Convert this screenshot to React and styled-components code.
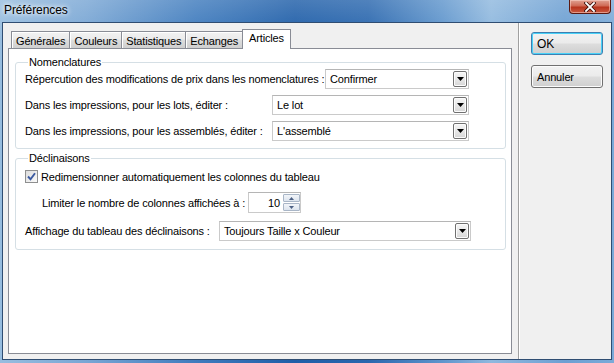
import React from 'react'
import styled, { createGlobalStyle } from 'styled-components'

const GlobalStyle = createGlobalStyle`
  html, body {
    margin: 0;
    padding: 0;
  }
  body {
    width: 614px;
    height: 363px;
    overflow: hidden;
    font-family: "Liberation Sans", Arial, sans-serif;
    font-size: 11px;
    letter-spacing: -0.15px;
    color: #000;
  }
`;

const Window = styled.div`
  width: 614px;
  height: 363px;
  display: flex;
  flex-direction: column;
  background:
    linear-gradient(180deg, rgba(255,255,255,0.18), rgba(255,255,255,0) 40px),
    linear-gradient(90deg, #97bddf 0%, #79a6d4 14%, #3f7bbd 32%, #1f5ea8 48%, #2a67ae 60%, #5f95cc 72%, #8fb8de 80%, #6c9fd2 92%, #7aaad8 100%);
`;

const TitleBar = styled.div`
  height: 22px;
  display: flex;
  align-items: center;
  padding-left: 4px;
`;

const Title = styled.span`
  font-size: 12px;
  letter-spacing: -0.1px;
  color: #000;
  text-shadow: 0 0 6px #fff, 0 0 4px rgba(255,255,255,0.9);
  margin-top: -2px;
`;

const CloseButton = styled.div`
  margin-left: auto;
  margin-right: 3px;
  align-self: flex-start;
  width: 42px;
  height: 14px;
  box-sizing: border-box;
  border: 1px solid #5b1a12;
  border-top: none;
  border-radius: 0 0 4px 4px;
  background: linear-gradient(180deg, #e0a293 0%, #cf6a55 45%, #b8341d 55%, #c95a41 100%);
  box-shadow: inset 0 0 0 1px rgba(255,220,210,0.5);
  display: flex;
  align-items: center;
  justify-content: center;
`;

const Client = styled.div`
  flex: 1;
  margin: 0 2px 3px 2px;
  border: 1px solid #2f4d72;
  background: #f0f0f0;
  display: flex;
`;

const LeftArea = styled.div`
  width: 515px;
  padding: 6px 0 0 5px;
  box-sizing: border-box;
  display: flex;
  flex-direction: column;
`;

const Separator = styled.div`
  width: 1px;
  background: #a0a0a0;
  border-right: 1px solid #fff;
`;

const RightArea = styled.div`
  flex: 1;
  padding: 9px 0 0 11px;
  display: flex;
  flex-direction: column;
  gap: 10px;
`;

const TabRow = styled.div`
  display: flex;
  align-items: flex-start;
  height: 20px;
  margin-bottom: -1px;
  padding-left: 3px;
  position: relative;
  z-index: 1;
`;

const Tab = styled.div`
  box-sizing: border-box;
  height: ${p => (p.$active ? 20 : 17)}px;
  margin-top: ${p => (p.$active ? 0 : 2)}px;
  margin-left: ${p => (p.$first ? 0 : -1)}px;
  padding: ${p => (p.$active ? '2px 6px 0' : '1px 4px 0')};
  border: 1px solid #898c95;
  border-bottom: none;
  background: ${p => (p.$active ? '#fff' : 'linear-gradient(180deg, #f2f2f2 0%, #ebebeb 45%, #dddddd 50%, #cfcfcf 100%)')};
  display: flex;
  align-items: ${p => (p.$active ? 'flex-start' : 'center')};
  white-space: nowrap;
  box-shadow: ${p => (p.$active ? 'none' : 'inset 1px 1px 0 #fff')};
`;

const Panel = styled.div`
  width: 504px;
  height: 306px;
  box-sizing: border-box;
  border: 1px solid #898c95;
  background: #fff;
  padding: 6px 5px 0 6px;
  display: flex;
  flex-direction: column;
  gap: 2px;
`;

const Group = styled.fieldset`
  margin: 0;
  min-width: 0;
  border: 1px solid #d5dfe5;
  border-radius: 3px;
  padding: 0 36px ${p => p.$pb}px 9px;
  display: flex;
  flex-direction: column;
  gap: ${p => p.$gap}px;
`;

const Legend = styled.legend`
  padding: 0 1px;
  margin-left: 3px;
  line-height: 14px;
`;

const Row = styled.div`
  display: flex;
  align-items: center;
  margin-top: ${p => p.$mt || 0}px;
  padding-left: ${p => p.$indent || 0}px;
`;

const Label = styled.span`
  width: ${p => p.$w}px;
  flex-shrink: 0;
  white-space: nowrap;
`;

const Combo = styled.div`
  width: ${p => p.$w}px;
  height: 20px;
  box-sizing: border-box;
  flex-shrink: 0;
  border: 1px solid #cacaca;
  border-top-color: #b5b5b5;
  background: #fff;
  display: flex;
  align-items: center;
  padding: 0 1px 0 4px;
`;

const ComboText = styled.span`
  flex: 1;
  white-space: nowrap;
`;

const DropButton = styled.div`
  width: 14px;
  height: 16px;
  box-sizing: border-box;
  border: 1px solid #707070;
  border-radius: 2px;
  background: linear-gradient(180deg, #f6f6f6 0%, #e8e8e8 50%, #d6d6d6 100%);
  box-shadow: inset 0 0 0 1px #fcfcfc;
  display: flex;
  align-items: center;
  justify-content: center;
`;

const CheckRow = styled.label`
  display: flex;
  align-items: center;
  gap: 3px;
  margin-top: 5px;
  white-space: nowrap;
`;

const CheckBox = styled.span`
  width: 13px;
  height: 13px;
  box-sizing: border-box;
  border: 1px solid #8e8f8f;
  background: linear-gradient(135deg, #dcdcdc, #fbfbfb);
  display: flex;
  align-items: center;
  justify-content: center;
`;

const Spin = styled.div`
  width: 53px;
  height: 21px;
  box-sizing: border-box;
  border: 1px solid #cacaca;
  border-top-color: #b5b5b5;
  background: #fff;
  display: flex;
  align-items: stretch;
`;

const SpinValue = styled.span`
  flex: 1;
  display: flex;
  align-items: center;
  justify-content: flex-end;
  padding-right: 3px;
`;

const SpinButtons = styled.div`
  width: 17px;
  display: flex;
  flex-direction: column;
  gap: 1px;
  padding: 1px 0;
`;

const SpinButton = styled.div`
  flex: 1;
  box-sizing: border-box;
  border: 1px solid #a9b6c7;
  border-radius: 1px;
  background: linear-gradient(180deg, #f2f5f9, #dce4ee);
  display: flex;
  align-items: center;
  justify-content: center;
`;

const Button = styled.div`
  width: 72px;
  height: 23px;
  box-sizing: border-box;
  border: 1px solid ${p => (p.$default ? '#3c7fb1' : '#707070')};
  border-radius: 3px;
  background: linear-gradient(180deg, #f2f2f2 0%, #ebebeb 48%, #dddddd 52%, #cfcfcf 100%);
  box-shadow: ${p => (p.$default ? 'inset 0 0 0 1px #48d1f8' : 'inset 0 0 0 1px #fcfcfc')};
  display: flex;
  align-items: center;
  padding-left: 5px;
  font-size: ${p => (p.$default ? 12 : 11)}px;
`;

const Caret = () => (
  <svg width="7" height="4" viewBox="0 0 7 4">
    <path d="M0 0 H7 L3.5 4 Z" fill="#000" />
  </svg>
);

const SpinArrow = ({ up }) => (
  <svg width="5" height="3" viewBox="0 0 5 3">
    <path d={up ? 'M0 3 H5 L2.5 0 Z' : 'M0 0 H5 L2.5 3 Z'} fill="#4d6185" />
  </svg>
);

const tabs = ['Générales', 'Couleurs', 'Statistiques', 'Echanges', 'Articles'];

const Select = ({ width, value }) => (
  <Combo $w={width}>
    <ComboText>{value}</ComboText>
    <DropButton><Caret /></DropButton>
  </Combo>
);

export default function App() {
  return (
    <Window>
      <GlobalStyle />
      <TitleBar>
        <Title>Préférences</Title>
        <CloseButton>
          <svg width="12" height="10" viewBox="0 0 12 10">
            <path d="M2 1 L10 9 M10 1 L2 9" stroke="#3a0d08" strokeWidth="3.4" strokeLinecap="square" />
            <path d="M2 1 L10 9 M10 1 L2 9" stroke="#fff" strokeWidth="1.8" strokeLinecap="square" />
          </svg>
        </CloseButton>
      </TitleBar>
      <Client>
        <LeftArea>
          <TabRow>
            {tabs.map((t, i) => (
              <Tab key={t} $first={i === 0} $active={t === 'Articles'}>{t}</Tab>
            ))}
          </TabRow>
          <Panel>
            <Group $pb={7} $gap={6}>
              <Legend>Nomenclatures</Legend>
              <Row>
                <Label $w={300}>Répercution des modifications de prix dans les nomenclatures :</Label>
                <Select width={144} value="Confirmer" />
              </Row>
              <Row>
                <Label $w={247}>Dans les impressions, pour les lots, éditer :</Label>
                <Select width={197} value="Le lot" />
              </Row>
              <Row>
                <Label $w={247}>Dans les impressions, pour les assemblés, éditer :</Label>
                <Select width={197} value="L'assemblé" />
              </Row>
            </Group>
            <Group $pb={8} $gap={0}>
              <Legend>Déclinaisons</Legend>
              <CheckRow>
                <CheckBox>
                  <svg width="9" height="9" viewBox="0 0 9 9">
                    <path d="M1 4.5 L3.5 7.2 L8 1.2" fill="none" stroke="#3c5aa0" strokeWidth="1.9" />
                  </svg>
                </CheckBox>
                Redimensionner automatiquement les colonnes du tableau
              </CheckRow>
              <Row $mt={9} $indent={17}>
                <Label $w={206}>Limiter le nombre de colonnes affichées à :</Label>
                <Spin>
                  <SpinValue>10</SpinValue>
                  <SpinButtons>
                    <SpinButton><SpinArrow up /></SpinButton>
                    <SpinButton><SpinArrow /></SpinButton>
                  </SpinButtons>
                </Spin>
              </Row>
              <Row $mt={8}>
                <Label $w={194}>Affichage du tableau des déclinaisons :</Label>
                <Select width={252} value="Toujours Taille x Couleur" />
              </Row>
            </Group>
          </Panel>
        </LeftArea>
        <Separator />
        <RightArea>
          <Button $default>OK</Button>
          <Button>Annuler</Button>
        </RightArea>
      </Client>
    </Window>
  );
}
